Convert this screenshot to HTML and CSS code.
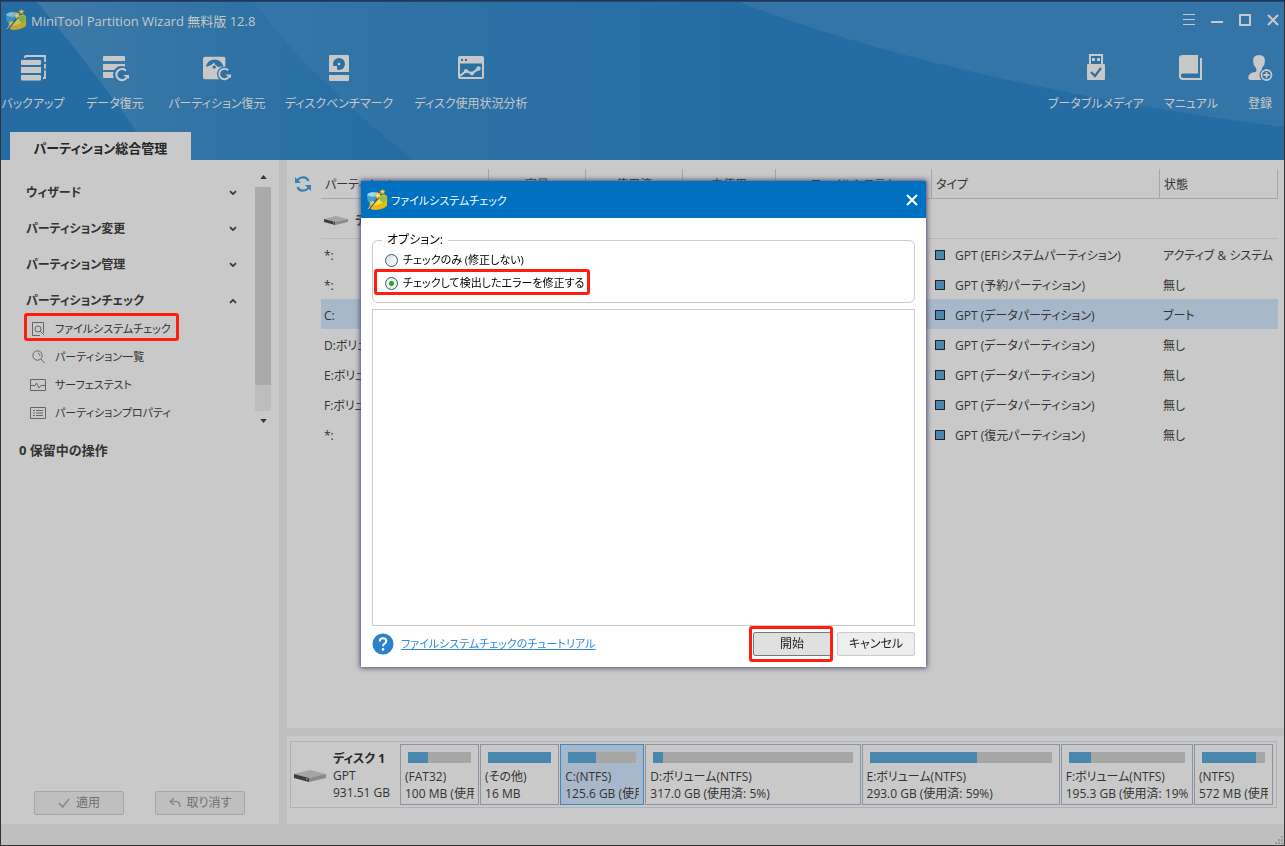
FILE: index.html
```html
<!DOCTYPE html>
<html lang="ja">
<head>
<meta charset="utf-8">
<title>MiniTool Partition Wizard</title>
<link rel="stylesheet" href="styles.css">
</head>
<body>
<svg class="defs" aria-hidden="true">
  <defs>
    <symbol id="logo" viewBox="0 0 24 24">
      <path d="M1 8Q2 3 9 3Q15 3 15 7V13Q9 16 2 14Z" fill="#3b9fd8"/>
      <ellipse cx="7.500" cy="6" rx="6" ry="2.500" fill="#9bd5ef"/>
      <path d="M4 14Q12 14 15 8Q20 4 23 8V18Q20 22 10 23Q5 23 4 20Z" fill="#e9b90c"/>
      <path d="M5 14Q14 14 16 8Q21 5 22 10Q18 18 6 18Z" fill="#f7dc45"/>
      <path d="M15 9Q21 5 23 11L19 15Q14 13 15 9Z" fill="#8fc53f"/>
      <path d="M2 23L14 9" stroke="#40516b" stroke-width="2"/>
      <path d="M2 22L9 14" stroke="#dde5ec" stroke-width="1"/>
      <path d="M12 3l1.500 2 2.500-1-1 2.500 2 2-3 .2-1.500 2.300-1-2.600-2.700-.8 2.300-1.600zM18 0l1 2 2 0-1.500 1.500.5 2-2-1-2 1 .5-2L15 2h2z" fill="#ffe36b" stroke="#c08d16" stroke-width=".6"/>
    </symbol>
    <symbol id="drive" viewBox="0 0 32 14">
      <path d="M0 5L16 1 32 5 15 9Z" fill="#a4a4a4"/>
      <path d="M0 5L15 9V13L0 9Z" fill="#3c3c3c"/>
      <path d="M15 9L32 5V9L15 13Z" fill="#8a8a8a"/>
      <rect x="12" y="9" width="1.500" height="2" fill="#35b44a"/>
    </symbol>
    <symbol id="down" viewBox="0 0 8 6"><path d="M1 1.200L4 4 7 1.200" fill="none" stroke="#333" stroke-width="1.700"/></symbol>
    <symbol id="up" viewBox="0 0 8 6"><path d="M1 4.800L4 2 7 4.800" fill="none" stroke="#333" stroke-width="1.700"/></symbol>
  </defs>
</svg>

<div class="window">
  <header class="header">
    <svg class="header-art" viewBox="0 0 1283 159" preserveAspectRatio="none" aria-hidden="true">
      <defs>
        <linearGradient id="g1" x1="0" x2="1"><stop offset="0" stop-color="#3f7aa8"/><stop offset=".7" stop-color="#2970a3"/><stop offset="1" stop-color="#246ca2"/></linearGradient>
        <linearGradient id="g2" x1="0" x2="1"><stop offset="0" stop-color="#3476a7"/><stop offset="1" stop-color="#246ca2"/></linearGradient>
      </defs>
      <path d="M36 0H255Q310 72 415 159H155Q110 90 36 0Z" fill="url(#g1)"/>
      <path d="M253 0H720V159H412Q305 72 253 0Z" fill="url(#g2)"/>
      <path d="M738 0H1283V126Q950 82 738 0Z" fill="#3375a6"/>
    </svg>
    <div class="titlebar">
      <svg class="logo"><use href="#logo"/></svg>
      <h1 class="app-name">MiniTool Partition Wizard 無料版 12.8</h1>
      <div class="window-controls">
        <button aria-label="メニュー"><svg viewBox="0 0 14 14"><path d="M1 1.500H13M1 6.500H13M1 11.500H13" stroke-width="1"/></svg></button>
        <button aria-label="最小化"><svg viewBox="0 0 14 14"><path d="M1 9H13" stroke-width="2"/></svg></button>
        <button aria-label="最大化"><svg viewBox="0 0 14 14"><path d="M2 2H12V12H2Z" stroke-width="2"/></svg></button>
        <button aria-label="閉じる"><svg viewBox="0 0 14 14"><path d="M2 2L12 12M12 2L2 12" stroke-width="2"/></svg></button>
      </div>
    </div>
    <nav class="toolbar">
      <button class="tool w-backup"><svg viewBox="0 0 28 28"><path d="M6 5V3Q6 2 7 2H26V24H24" fill="none" stroke="#c8c8c8" stroke-width="1.800"/><path d="M24 9H28M24 15.500H28" stroke="#2d71a4" stroke-width="2"/><rect x="1" y="4" width="23" height="24" rx="2" fill="#2d71a4"/><rect x="2" y="6" width="20" height="5" rx="1"/><rect x="2" y="13" width="20" height="6"/><rect x="2" y="21" width="20" height="5.500" rx="1"/></svg>バックアップ</button>
      <button class="tool w-data"><svg viewBox="0 0 28 28"><path d="M3 2H23Q24 2 24 3V7H2V3Q2 2 3 2ZM2 10H24V16H2ZM2 18H14V24H3Q2 24 2 23Z"/><circle cx="20.500" cy="20.500" r="8.500" fill="#2d71a4"/><path d="M25 16.700A5.600 5.600 0 1 0 26 23" fill="none" stroke="#c8c8c8" stroke-width="2.200"/><path d="M22 21H28V25Z"/></svg>データ復元</button>
      <button class="tool w-part"><svg viewBox="0 0 30 28"><rect x="0" y="2" width="24" height="24" rx="2"/><path d="M3 13Q5 5 13 5Q19 5 22 12L16 13Q14 10 11 10Z" fill="#2d71a4"/><path d="M5 14L12 8 14 14Z"/><circle cx="12" cy="13" r="1.800" fill="#2d71a4"/><circle cx="23" cy="20.500" r="8" fill="#2d71a4"/><path d="M27 16.500A5.600 5.600 0 1 0 28 23" fill="none" stroke="#c8c8c8" stroke-width="2.200"/><path d="M24 21H30V25Z"/></svg>パーティション復元</button>
      <button class="tool w-bench"><svg viewBox="0 0 28 28"><path d="M5 1H23Q24 1 24 2V18H4V2Q4 1 5 1ZM4 21H24V26Q24 27 23 27H5Q4 27 4 26Z"/><circle cx="14" cy="10" r="6" fill="#2970a3"/><path d="M7 12H12V17H7Z"/><circle cx="14" cy="10" r="1.300"/></svg>ディスクベンチマーク</button>
      <button class="tool w-usage"><svg viewBox="0 0 28 28"><path d="M3 2H25Q27 2 27 4V23Q27 25 25 25H3Q1 25 1 23V4Q1 2 3 2Z"/><path d="M3 9.500H25V23H3ZM4 5H6V7H4ZM8 5H10V7H8Z" fill="#2970a3"/><path d="M3 22L9 17 15 19.500 21 15" fill="none" stroke="#c8c8c8" stroke-width="2.200"/><circle cx="9" cy="17" r="2.100"/><circle cx="15" cy="19.500" r="2"/><circle cx="21.500" cy="14.500" r="2.200"/></svg>ディスク使用状況分析</button>
      <span class="spacer"></span>
      <span class="toolbar-end">
        <button class="tool w-media"><svg viewBox="0 0 28 28"><path d="M7 0H21V11H7Z"/><path d="M9 2H19V10H9Z" fill="#2d71a4"/><path d="M10 4H13V7H10ZM15 4H18V7H15ZM6 10H22Q23 10 23 11V25Q23 26 22 26H6Q5 26 5 25V11Q5 10 6 10Z"/><path d="M9 18L13 22 19 14" fill="none" stroke="#2d71a4" stroke-width="2.200"/></svg>ブータブルメディア</button>
        <button class="tool w-manual"><svg viewBox="0 0 28 28"><path d="M6 1H21V20H6Q4 20 4 22Q4 24 6 24H23V4H25V26H6Q2 26 2 22V4Q2 1 6 1Z"/><path d="M6 19.500H21V22.500H6Q4 22.500 4 21Q4 19.500 6 19.500Z" fill="#2d71a4"/></svg>マニュアル</button>
        <button class="tool w-register"><svg viewBox="0 0 28 28"><path d="M7 7Q7 1 13 1Q19 1 19 7Q19 11 16 14Q15 17 18 18Q22 19 23 24L20 26H4Q1 25 3 21Q5 18 10 18Q11 16 10 14Q7 11 7 7Z"/><circle cx="20.500" cy="21" r="7" fill="#2d71a4"/><circle cx="20.500" cy="21" r="5" fill="none" stroke="#c8c8c8" stroke-width="1.800"/><path d="M17.500 21H23.500M20.500 18V24" stroke="#c8c8c8" stroke-width="1.800"/></svg>登録</button>
      </span>
    </nav>
    <div class="tabs"><button class="tab">パーティション総合管理</button></div>
  </header>

  <div class="body">
    <aside class="sidebar">
      <div class="tree">
        <nav class="groups">
          <button class="group">ウィザード<svg><use href="#down"/></svg></button>
          <button class="group">パーティション変更<svg><use href="#down"/></svg></button>
          <button class="group">パーティション管理<svg><use href="#down"/></svg></button>
          <button class="group">パーティションチェック<svg><use href="#up"/></svg></button>
          <button class="leaf marked"><svg viewBox="0 0 16 16"><path d="M10 14.500H2.500V1.500H13.500V12"/><circle cx="8" cy="8" r="3"/><path d="M10 10L14 14"/></svg>ファイルシステムチェック</button>
          <button class="leaf"><svg viewBox="0 0 16 16"><circle cx="7.500" cy="6.500" r="4.700"/><path d="M8 4Q10 5 10 7M11 10L14.500 14"/></svg>パーティション一覧</button>
          <button class="leaf"><svg viewBox="0 0 16 16"><path d="M.5 2.500H15.500V13.500H.5ZM1 8.500H5L6.500 6 9 11 11 8.500H15"/></svg>サーフェステスト</button>
          <button class="leaf"><svg viewBox="0 0 16 16"><path d="M.5 2.500H15.500V13.500H.5ZM3 5.500H5M6 5.500H13M3 8H5M6 8H13M3 10.500H5M6 10.500H13"/></svg>パーティションプロパティ</button>
        </nav>
        <div class="scrollbar" aria-hidden="true">
          <svg viewBox="0 0 8 5"><path d="M0 5L4 0 8 5Z"/></svg>
          <div class="track"><div class="thumb"></div></div>
          <svg viewBox="0 0 8 5"><path d="M0 0L4 5 8 0Z"/></svg>
        </div>
      </div>
      <h2 class="pending">0 保留中の操作</h2>
      <div class="actions">
        <button disabled><svg viewBox="0 0 12 12"><path d="M1 6L4.500 10 11 2"/></svg>適用</button>
        <button disabled><svg viewBox="0 0 12 12"><path d="M5 1L1 4.500 5 8M1 4.500H7Q11 4.500 11 10"/></svg>取り消す</button>
      </div>
    </aside>

    <main class="main">
      <section class="list">
        <button class="refresh" aria-label="更新"><svg viewBox="0 0 16 16"><path d="M2 7A6 6 0 0 1 13.500 5M14 9A6 6 0 0 1 2.500 11" fill="none" stroke="#3a80b5" stroke-width="2.200"/><path d="M0 1V7H6ZM16 15V9H10Z" fill="#3a80b5"/></svg></button>
        <table class="partitions">
          <colgroup><col class="c-name"><col class="c-size"><col class="c-size"><col class="c-free"><col class="c-fs"><col><col class="c-state"></colgroup>
          <thead><tr><th class="start">パーティション</th><th>容量</th><th>使用済</th><th>未使用</th><th>ファイルシステム</th><th class="start">タイプ</th><th class="start">状態</th></tr></thead>
          <tbody>
            <tr class="disk"><td colspan="7"><div class="disk-label"><svg><use href="#drive"/></svg>ディスク 1</div></td></tr>
            <tr><td>*:</td><td></td><td></td><td></td><td></td><td><i class="swatch"></i>GPT (EFIシステムパーティション)</td><td>アクティブ &amp; システム</td></tr>
            <tr><td>*:</td><td></td><td></td><td></td><td></td><td><i class="swatch"></i>GPT (予約パーティション)</td><td>無し</td></tr>
            <tr class="selected"><td>C:</td><td></td><td></td><td></td><td></td><td><i class="swatch"></i>GPT (データパーティション)</td><td>ブート</td></tr>
            <tr><td>D:ボリューム</td><td></td><td></td><td></td><td></td><td><i class="swatch"></i>GPT (データパーティション)</td><td>無し</td></tr>
            <tr><td>E:ボリューム</td><td></td><td></td><td></td><td></td><td><i class="swatch"></i>GPT (データパーティション)</td><td>無し</td></tr>
            <tr><td>F:ボリューム</td><td></td><td></td><td></td><td></td><td><i class="swatch"></i>GPT (データパーティション)</td><td>無し</td></tr>
            <tr><td>*:</td><td></td><td></td><td></td><td></td><td><i class="swatch"></i>GPT (復元パーティション)</td><td>無し</td></tr>
          </tbody>
        </table>
      </section>
      <section class="map">
        <div class="map-disk">
          <svg><use href="#drive"/></svg>
          <div><strong>ディスク 1</strong><br>GPT<br>931.51 GB</div>
        </div>
        <div class="blocks">
          <div class="block"><div class="bar"><div style="width:32%"></div></div><p>(FAT32)<br>100 MB (使用済: 32%)</p></div>
          <div class="block"><div class="bar"><div style="width:100%"></div></div><p>(その他)<br>16 MB</p></div>
          <div class="block current"><div class="bar"><div style="width:41%"></div></div><p>C:(NTFS)<br>125.6 GB (使用済: 41%)</p></div>
          <div class="block"><div class="bar"><div style="width:5%"></div></div><p>D:ボリューム(NTFS)<br>317.0 GB (使用済: 5%)</p></div>
          <div class="block"><div class="bar"><div style="width:59%"></div></div><p>E:ボリューム(NTFS)<br>293.0 GB (使用済: 59%)</p></div>
          <div class="block"><div class="bar"><div style="width:19%"></div></div><p>F:ボリューム(NTFS)<br>195.3 GB (使用済: 19%)</p></div>
          <div class="block"><div class="bar"><div style="width:86%"></div></div><p>(NTFS)<br>572 MB (使用済: 86%)</p></div>
        </div>
      </section>
    </main>
  </div>
  <footer class="statusbar"><svg viewBox="0 0 8 8" aria-hidden="true"><path d="M6 0H8V2H6ZM3 3H5V5H3ZM6 3H8V5H6ZM0 6H2V8H0ZM3 6H5V8H3ZM6 6H8V8H6Z"/></svg></footer>
</div>

<div class="overlay">
  <div class="dialog" role="dialog" aria-labelledby="dialog-title">
    <div class="dialog-head">
      <svg class="logo"><use href="#logo"/></svg>
      <h2 id="dialog-title">ファイルシステムチェック</h2>
      <button aria-label="閉じる"><svg viewBox="0 0 12 12"><path d="M1 1L11 11M11 1L1 11"/></svg></button>
    </div>
    <form class="dialog-body">
      <fieldset>
        <legend>オプション:</legend>
        <label class="option"><input type="radio" name="mode">チェックのみ (修正しない)</label>
        <label class="option marked"><input type="radio" name="mode" checked>チェックして検出したエラーを修正する</label>
      </fieldset>
      <div class="log"></div>
      <div class="dialog-foot">
        <svg viewBox="0 0 22 22" aria-hidden="true"><circle cx="11" cy="11" r="10.500" fill="#2b82ca"/><path d="M7.700 8.500Q7.700 5.200 11 5.200Q14.300 5.200 14.300 8Q14.300 9.500 12.500 10.700Q11 11.600 11 13.200" fill="none" stroke="#fff" stroke-width="2"/><circle cx="11" cy="16.400" r="1.300" fill="#fff"/></svg>
        <a href="#">ファイルシステムチェックのチュートリアル</a>
        <span class="marked"><button type="button" class="primary">開始</button></span>
        <button type="button">キャンセル</button>
      </div>
    </form>
  </div>
</div>
</body>
</html>
```
FILE: styles.css
```css
* { box-sizing: border-box; }
body {
  margin: 0;
  font: 12px/18px "Open Sans", "Noto Sans CJK JP", sans-serif;
  font-feature-settings: "palt";
  color: #333;
}
button, input { font: inherit; color: inherit; font-feature-settings: inherit; }
button { margin: 0; padding: 0; border: 0; background: none; white-space: nowrap; }
h1, h2, p { margin: 0; font-size: 12px; font-weight: 400; }
svg { display: block; flex: none; }
.defs { position: absolute; width: 0; height: 0; }

.window {
  display: flex;
  flex-direction: column;
  min-height: 100vh;
  border: 1px solid #333;
  background: #c9c9c9;
}

/* Header */
.header { position: relative; display: flex; flex-direction: column; background: #246ca2; color: #c8c8c8; border-top: 1px solid #114b8d; }
.header-art { position: absolute; inset: 0; width: 100%; height: 100%; }
.titlebar, .toolbar, .tabs { position: relative; display: flex; }
.titlebar { height: 36px; align-items: center; padding-left: 4px; }
.logo { width: 22px; height: 22px; }
.titlebar .logo { opacity: .78; }
.app-name { margin-left: 4px; padding-top: 1px; font-size: 13px; }
.window-controls { display: flex; gap: 14px; margin-left: auto; padding-right: 4px; }
.window-controls svg { width: 14px; height: 14px; fill: none; stroke: #c8c8c8; }
.toolbar { height: 94px; padding-top: 16px; }
.tool { display: flex; flex-direction: column; align-items: center; gap: 13px; }
.tool svg { width: 28px; height: 28px; fill: #c8c8c8; }
.spacer { flex: 1; }
.toolbar-end { display: flex; gap: 10px; }
.w-backup { width: 64px; }
.w-data { width: 100px; }
.w-part { width: 104px; }
.w-bench { width: 140px; }
.w-usage { width: 124px; }
.w-media { width: 100px; }
.w-manual { width: 70px; }
.w-register { width: 48px; }
.tabs { padding-left: 9px; }
.tab { width: 181px; height: 28px; padding-top: 3px; background: #c9c9c9; color: #262626; font-weight: 700; font-size: 13px; }

/* Body */
.body { flex: 1; display: flex; }
.sidebar { flex: none; width: 286px; display: flex; flex-direction: column; border-right: 8px solid #bfbfbf; }
.tree { display: flex; gap: 12px; padding: 15px 8px 0 23px; }
.groups { flex: 1; }
.group { display: flex; align-items: center; justify-content: space-between; width: 100%; height: 36px; padding: 0 6px 0 2px; font-weight: 700; }
.group svg { width: 8px; height: 6px; }
.leaf { display: flex; align-items: center; gap: 9px; height: 28px; padding: 3px 8px 0 6px; font-size: 11px; }
.leaf svg { width: 16px; height: 16px; fill: none; stroke: #666; }
.marked { outline: 3px solid #ff1d12; outline-offset: -3px; border-radius: 3px; }
.leaf.marked { margin-top: -6px; }
.scrollbar { width: 16px; display: flex; flex-direction: column; align-items: center; gap: 8px; }
.scrollbar svg { width: 7px; height: 4px; fill: #333; }
.track { width: 16px; height: 224px; background: #bdbdbd; }
.thumb { height: 198px; background: #aaa; }
.pending { margin: 16px 0 0 18px; font-weight: 700; font-size: 13px; }
.actions { display: flex; gap: 31px; margin-top: auto; padding: 0 0 9px 33px; }
.actions button { display: flex; align-items: center; justify-content: center; gap: 6px; width: 90px; height: 24px; border: 1px solid #a6a6a6; border-radius: 2px; background: #bfbfbf; color: #707070; }
.actions svg { width: 12px; height: 12px; fill: none; stroke: #888; stroke-width: 1.5; }

.main { flex: 1; min-width: 0; display: flex; flex-direction: column; }
.list { flex: 1; display: flex; align-items: flex-start; padding: 9px 6px 0 8px; border-bottom: 8px solid #bfbfbf; }
.refresh { flex: none; margin: 7px 10px 0 0; }
.refresh svg { width: 16px; height: 16px; }
.partitions { flex: 1; min-width: 0; table-layout: fixed; border-collapse: separate; border-spacing: 0; white-space: nowrap; }
.c-name { width: 168px; }
.c-size { width: 97px; }
.c-free { width: 93px; }
.c-fs { width: 156px; }
.c-state { width: 118px; }
.partitions th { height: 30px; padding: 2px 4px 0; border: solid #a6a6a6; border-width: 0 1px 1px 0; font-weight: 400; text-align: center; }
.partitions .start { text-align: left; }
.partitions td { height: 30px; padding: 4px 3px 0; overflow: hidden; }
.partitions .disk td { height: 40px; border-bottom: 1px solid #b8b8b8; }
.disk-label { display: flex; align-items: center; gap: 7px; font-weight: 700; }
.disk-label svg { width: 24px; height: 11px; }
.selected td { background: #a6b8c9; }
.swatch { display: inline-block; width: 10px; height: 10px; margin-right: 10px; border: 1px solid #222; background: #4a87af; }

/* Disk map */
.map { display: flex; margin: 5px 7px 16px 3px; padding: 2px 3px; border: 1px solid #adb1b9; line-height: 17px; white-space: nowrap; }
.map-disk { flex: none; display: flex; align-items: center; gap: 7px; width: 106px; padding-top: 2px; }
.map-disk svg { width: 32px; height: 14px; }
.map-disk strong { color: #262626; }
.blocks {
  flex: 1;
  min-width: 0;
  display: grid;
  grid-template-columns: minmax(0, 79fr) minmax(0, 79fr) minmax(0, 84fr) minmax(0, 215fr) minmax(0, 198fr) minmax(0, 132fr) minmax(0, 79fr);
  gap: 1px;
}
.block { padding: 7px 4px 2px; border: 1px solid #8a95a3; }
.block p { overflow: hidden; }
.block.current { border-color: #4088c0; background: #a6b8c9; }
.bar { height: 11px; margin: 0 3px 5px; background: #a6a6a6; }
.bar div { height: 100%; background: #4a87af; }
.statusbar { display: flex; align-items: flex-end; justify-content: flex-end; height: 21px; padding: 1px; background: #bfbfbf; }
.statusbar svg { width: 8px; height: 8px; fill: #999; }

/* Dialog */
.overlay { position: fixed; inset: 0; display: grid; place-content: center; }
.dialog { width: 565px; margin: 2px 0 0 2px; background: #fff; color: #000; box-shadow: 0 0 5px 1px #4a4a70; }
.dialog-head { display: flex; align-items: center; height: 37px; padding: 0 8px 0 5px; background: #0070c0; color: #fff; }
.dialog-head h2 { flex: 1; margin-left: 3px; padding-top: 2px; font-size: 11px; }
.dialog-head button svg { width: 12px; height: 12px; fill: none; stroke: #fff; stroke-width: 2; }
.dialog-body { padding: 13px 11px 5px; }
fieldset { margin: 0; padding: 0 2px 7px 1px; border: 1px solid #ccc; border-radius: 6px; }
legend { margin-left: 8px; padding: 0 5px; }
.option { display: flex; align-items: center; gap: 5px; width: max-content; height: 20px; padding: 2px 6px 0 11px; font-size: 11px; }
.option.marked { height: 26px; }
.option input {
  appearance: none;
  width: 13px;
  height: 13px;
  margin: 0;
  border: 1px solid #31587a;
  border-radius: 50%;
  background: linear-gradient(135deg, #ddd, #fff);
}
.option input:checked { background: radial-gradient(circle, #27a527 0 2px, #eee 3px); }
.log { height: 317px; margin-top: 6px; border: 1px solid #ccc; }
.dialog-foot { display: flex; align-items: center; }
.dialog-foot > svg { width: 22px; height: 22px; }
.dialog-foot a { margin: 0 auto 0 7px; color: #3089dd; font-size: 11px; }
.dialog-foot button { width: 78px; height: 24px; border: 1px solid #ccc; border-radius: 2px; background: #eee; color: #222; }
.dialog-foot .primary { border-color: #777; background: #e0e0e0; }
.dialog-foot .marked { display: flex; margin-right: 4px; padding: 6px 2px 6px 4px; }
```
